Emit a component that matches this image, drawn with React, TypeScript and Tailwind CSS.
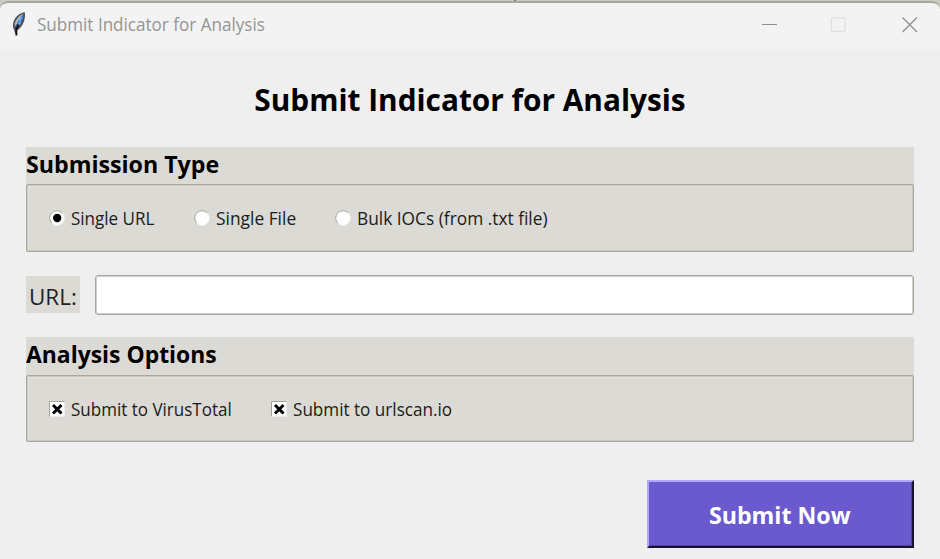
import React from "react";

type LabelProps = { children: React.ReactNode; className?: string };

function Label({ children, className = "" }: LabelProps) {
  return <span className={`block whitespace-pre ${className}`}>{children}</span>;
}

function FeatherIcon() {
  return (
    <svg width="16" height="26" viewBox="0 0 16 26" className="-ml-px block">
      <path d="M13.800 1.200C9 1.600 4.400 5.500 2.600 10.500c-1 3.200-.9 6 .6 8.500l1.200 4.500 1.300-3.800c3.500-1.900 5.900-5.200 7.300-9.400 1-3.400 1.300-6.300.8-9.100z" fill="#4a4f55" />
      <path d="M12.300 2.200C8.200 4.500 5 8 3.800 12l-.2 4L9 8.200z" fill="#b0bac0" />
      <path d="M12.700 3C9.300 6 6 10.500 4.800 17c3.600-2 5.900-5.200 6.900-8.800.6-1.800 1-3.600 1-5.200z" fill="#3f7fd0" />
      <path d="M10.500 6 8.200 10M9.300 11l-2 3" stroke="#82b8ef" strokeWidth="1.400" />
      <path d="M7.500 13.500 5.400 18v6.400" stroke="#111" strokeWidth="1.800" fill="none" />
    </svg>
  );
}

function TitleBar() {
  return (
    <div className="h-[49px] bg-[#cdccc4]">
      <div className="ml-[514px] h-px w-[2px] bg-[#77766f]" />
      <header className="flex h-12 items-start rounded-t-[8px] border-t-2 border-[#a8a79f] bg-[#f3f3f3] pl-3 pr-[22px] pt-[9px]">
        <div className="-mt-2 pt-[7px]"><FeatherIcon /></div>
        <Label className="ml-[10px] flex-1 origin-left scale-x-[0.948] text-[18px] leading-6 text-[#959595]">Submit Indicator for Analysis</Label>
        <svg width="156" height="16" viewBox="0 0 156 16" fill="none" className="mt-[5px] block">
          <path d="M0 7.500h15" stroke="#8f8f8f" />
          <rect x="69.500" y=".8" width="13.500" height="13.500" rx="1" stroke="#dfdfdf" strokeWidth="1.300" />
          <path d="m140.500.5 14.500 14.500M155 .500 140.500 15" stroke="#8f8f8f" strokeWidth="1.300" />
        </svg>
      </header>
    </div>
  );
}

function Radio({ checked = false }: { checked?: boolean }) {
  return (
    <svg width="16" height="16" viewBox="0 0 16 16" className="block">
      <circle cx="8" cy="8" r="7.400" fill="#fff" stroke="#efeeea" />
      <path d="M2.800 13.200A7.300 7.300 0 0 1 13.200 2.800" fill="none" stroke="#a5a39b" />
      {checked && <circle cx="8.200" cy="8" r="4.200" fill="#000" />}
    </svg>
  );
}

function CheckBox() {
  return (
    <svg width="16" height="16" viewBox="0 0 16 16" className="block">
      <path d="M.5.500h15v15H.5z" fill="#fff" stroke="#eeede9" />
      <path d="M.5 15.500V.500h15" fill="none" stroke="#a5a39b" />
      <path d="m4 4 8.500 8.500M12.500 4 4 12.500" stroke="#000" strokeWidth="3" />
    </svg>
  );
}

function Option({ icon, text, textClass = "scale-x-[0.945]" }: { icon: React.ReactNode; text: string; textClass?: string }) {
  return (
    <div className="flex items-center gap-[6px]">
      {icon}
      <Label className={`origin-left text-[18px] leading-6 text-[#1b1b1b] ${textClass}`}>{text}</Label>
    </div>
  );
}

function Group({ title, titleClass, frameClass, children }: { title: string; titleClass: string; frameClass: string; children: React.ReactNode }) {
  return (
    <section className="h-[105px] bg-[#dcdad5]">
      <h2 className={`origin-left whitespace-pre text-[22.500px] font-bold leading-[36px] text-black ${titleClass}`}>{title}</h2>
      <div className={`flex items-center rounded-[2px] border border-[#a9a7a0] pl-[22px] shadow-[inset_0_0_0_1px_#c9c7c1,inset_2px_2px_0_#e5e3de] ${frameClass}`}>
        {children}
      </div>
    </section>
  );
}

export default function App() {
  return (
    <div className="flex h-[559px] w-[940px] flex-col overflow-hidden bg-[#efefef] font-['Open_Sans',sans-serif]">
      <TitleBar />
      <main className="flex flex-col px-[26px]">
        <h1 className="mt-[29px] h-[69px] scale-x-[0.993] whitespace-pre text-center text-[30px] font-bold leading-[44px] text-black">Submit Indicator for Analysis</h1>
        <Group title="Submission Type" titleClass="h-[37px] scale-x-[1.03]" frameClass="h-[68px]">
          <div className="w-[145px]"><Option icon={<Radio checked />} text="Single URL" /></div>
          <div className="w-[141px]"><Option icon={<Radio />} text="Single File" textClass="scale-x-[0.965]" /></div>
          <Option icon={<Radio />} text="Bulk IOCs (from .txt file)" textClass="scale-x-[0.962]" />
        </Group>
        <div className="mb-[22px] mt-[23px] flex h-10 items-center gap-[15px]">
          <div className="-mt-px h-[37px] w-[54px] bg-[#dcdad5] pl-[3px]"><Label className="origin-left scale-x-[1.02] text-[22px] leading-[40px] text-[#222]">URL:</Label></div>
          <input className="h-10 min-w-0 flex-1 rounded-[3px] border border-[#a9a79f] bg-white shadow-[inset_0_0_0_1px_#cfcdc8] outline-none" />
        </div>
        <Group title="Analysis Options" titleClass="h-[38px] scale-x-[1.018]" frameClass="h-[67px]">
          <div className="w-[222px]"><Option icon={<CheckBox />} text="Submit to VirusTotal" /></div>
          <Option icon={<CheckBox />} text="Submit to urlscan.io" textClass="scale-x-[0.95]" />
        </Group>
        <button className="mt-[38px] flex h-[68px] w-[267px] items-center justify-center self-end border-2 border-b-[#17132d] border-l-[#b3a6ff] border-r-[#17132d] border-t-[#b3a6ff] bg-[#6a5acd] shadow-[inset_-1px_-1px_0_#50449b]">
          <Label className="mr-[2px] scale-x-[1.03] pt-[3px] text-[22.500px] font-bold leading-8 text-white">Submit Now</Label>
        </button>
      </main>
    </div>
  );
}
